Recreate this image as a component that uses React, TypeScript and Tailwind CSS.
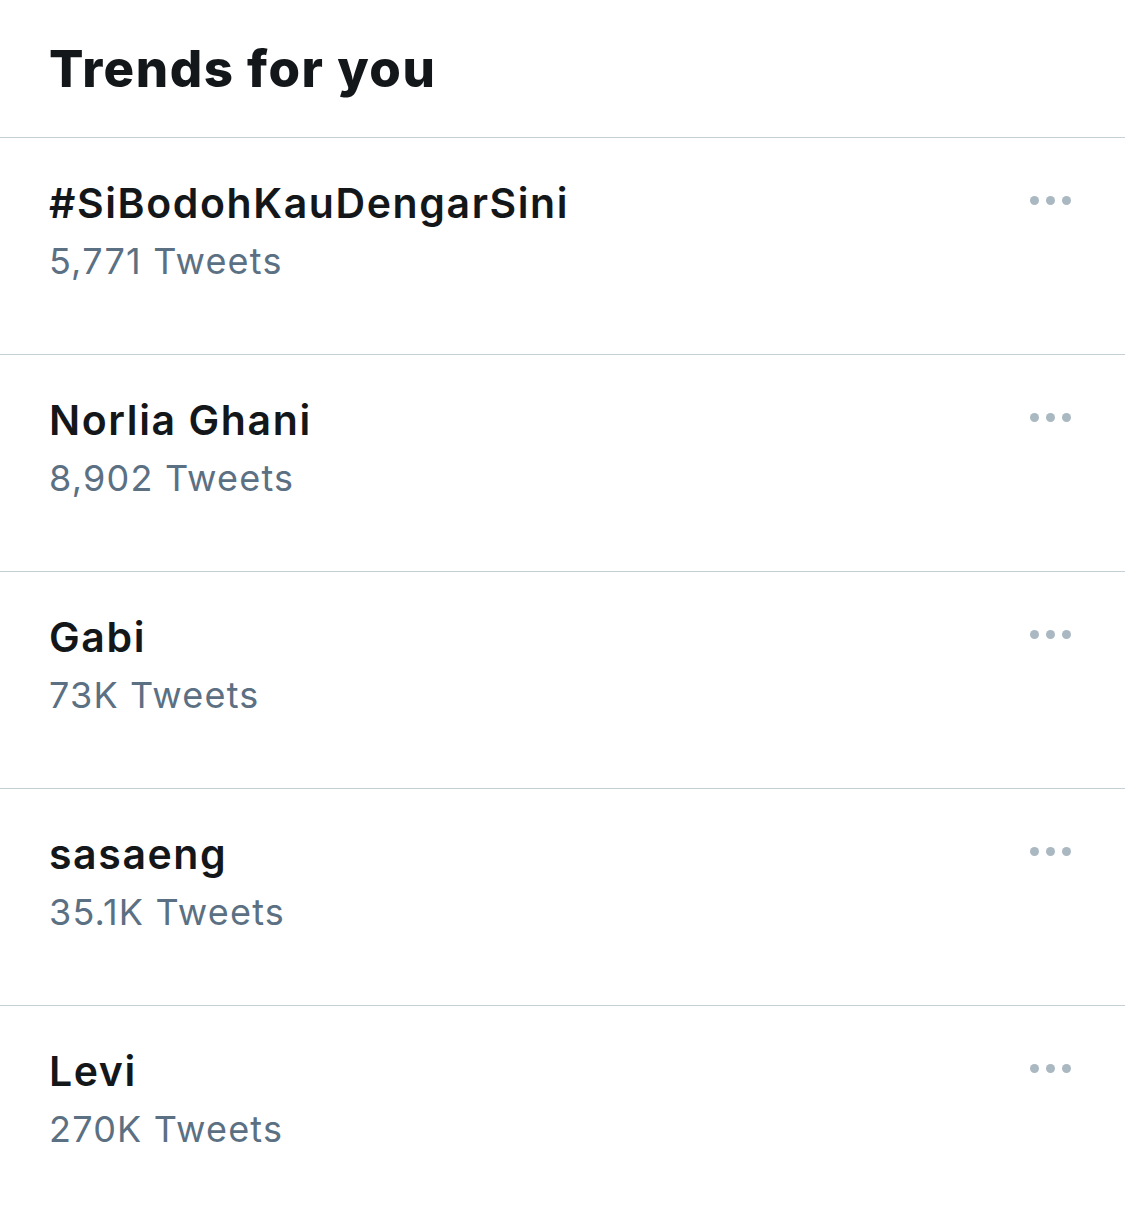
const trends = [
  { name: '#SiBodohKauDengarSini', count: '5,771 Tweets' },
  { name: 'Norlia Ghani', count: '8,902 Tweets' },
  { name: 'Gabi', count: '73K Tweets' },
  { name: 'sasaeng', count: '35.1K Tweets' },
  { name: 'Levi', count: '270K Tweets' },
];

function MoreDots() {
  return (
    <div className="flex items-center gap-[7px] pt-[15px]">
      <span className="block h-[9px] w-[9px] rounded-full bg-[#aab8c2]" />
      <span className="block h-[9px] w-[9px] rounded-full bg-[#aab8c2]" />
      <span className="block h-[9px] w-[9px] rounded-full bg-[#aab8c2]" />
    </div>
  );
}

export default function App() {
  return (
    <div className="min-h-[1211px] w-[1125px] bg-white font-['Inter','Noto_Sans',sans-serif]">
      <div className="h-[138px] border-b-[1.5px] border-[#c4cfd6] px-[49px] pt-[38px]">
        <h1 className="text-[51px] font-extrabold leading-[1.2] tracking-[1.5px] text-[#14171a]">
          Trends for you
        </h1>
      </div>
      {trends.map((trend) => (
        <div
          key={trend.name}
          className="flex h-[217px] items-start justify-between border-b-[1.5px] border-[#c4cfd6] pl-[49px] pr-[54px] pt-[43px] last:border-b-0"
        >
          <div className="flex flex-col gap-[14px]">
            <span className="text-[41px] font-semibold leading-[44px] tracking-[1.6px] text-[#14171a]">
              {trend.name}
            </span>
            <span className="text-[36px] leading-[44px] tracking-[1.2px] text-[#5b7083]">{trend.count}</span>
          </div>
          <MoreDots />
        </div>
      ))}
    </div>
  );
}
